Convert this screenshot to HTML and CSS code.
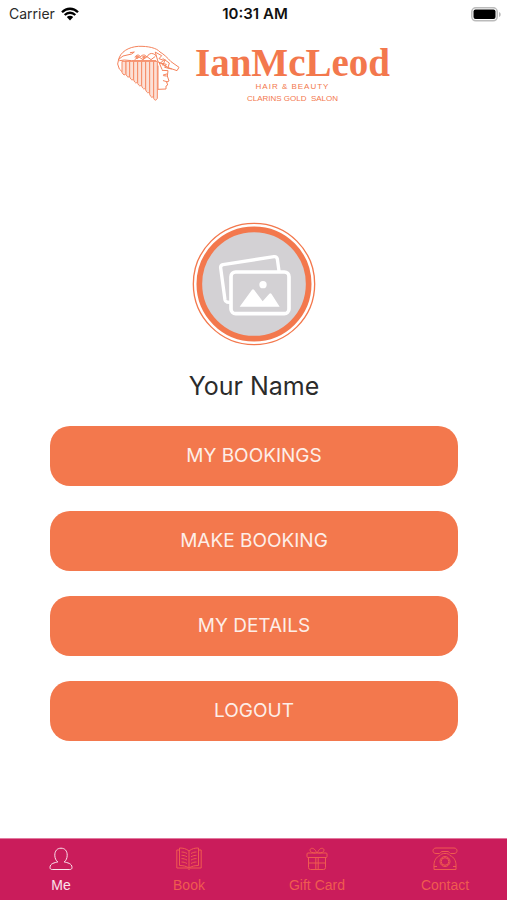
FILE: index.html
```html
<!DOCTYPE html>
<html lang="en">
<head>
<meta charset="utf-8">
<meta name="viewport" content="width=device-width, initial-scale=1">
<title>Ian McLeod Hair &amp; Beauty</title>
<link rel="stylesheet" href="styles.css">
</head>
<body>
<div class="status">
  <div class="carrier">
    <span>Carrier</span>
    <svg class="wifi" viewBox="0 0 18 14" aria-hidden="true">
      <path d="M1 5.2C5.6.6 12.4.6 17 5.2M3.7 8C6.8 5 11.2 5 14.3 8" fill="none" stroke="#000" stroke-width="2.3"/>
      <path d="M5.8 10.1a4.6 4.6 0 0 1 6.4 0L9 13.4z"/>
    </svg>
  </div>
  <time class="clock">10:31 AM</time>
  <svg class="battery" viewBox="0 0 30 15" aria-hidden="true">
    <rect x=".8" y=".8" width="25.400" height="13" rx="4" fill="#fff" stroke="#bbb" stroke-width="1.500"/>
    <rect x="2.500" y="2.500" width="22" height="9.600" rx="2"/>
    <path d="M28 5v5c2.300-.8 2.300-4.200 0-5z" fill="#bbb"/>
  </svg>
</div>

<header class="brand">
  <svg class="bust" viewBox="24 18 192 174" aria-hidden="true">
    <g fill="none" stroke="#f5835c" stroke-width="3" stroke-linejoin="round" stroke-linecap="round">
      <path d="M29 64C34 42 58 27 88 25c30-1 55 5 65 17 12 7 22 17 33 29l24 17-6 10-26-9-31-18-8-28"/>
      <path d="M29 64l-3 14 5 15 9 9M29 64l13-10 26-6 8-6-12 2M32 68l14-2 22 2h72"/>
      <path d="M78 57c4-8 14-8 16 0 5-8 16-8 19 0l8-9c8-4 16 0 20 5M78 64l12-7 12 8 12-9 12 9 12-9"/>
      <path d="M140 43l18 10-8 9 14 5-10 8 18 4-5 9 20 5M150 73l9 21M162 62l19 13-4 14M168 65l-6 17"/>
      <path d="M147 84v69M160 97l17 1-2 16 5 15-7 3 3 9-5 3v9l-24 1"/>
      <path d="M163 111l10-3M164 113l8 1M163 128l10 3"/>
    </g>
    <g fill="#fce0d6" stroke="#f68a64" stroke-width="3" stroke-linejoin="round">
      <path d="M39 70h12v37q-6 9-12-4z"/><path d="M51 70h11v44q-5 9-11-5z"/>
      <path d="M62 70h12v52q-5 10-12-5z"/><path d="M74 70h12v61q-6 10-12-5z"/>
      <path d="M86 70h12v70q-6 9-12-4z"/><path d="M98 70h12v79q-6 10-12-5z"/>
      <path d="M110 70h12v91q-6 9-12-5z"/><path d="M122 70h12v104q-6 10-12-5z"/>
      <path d="M134 70h11v111q-6 11-11 0z"/>
    </g>
    <path d="M78 56q9-8 14 2l-8 6zM99 56q9-7 13 2l-9 7z" fill="#f79470"/>
  </svg>
  <div class="brand-text">
    <h1 class="wordmark">IanMcLeod</h1>
    <p class="tagline wide">HAIR &amp; BEAUTY</p>
    <p class="tagline">CLARINS GOLD&nbsp; SALON</p>
  </div>
</header>

<main class="profile">
  <svg class="avatar" viewBox="22 22 372 372" role="img" aria-label="Profile photo">
    <circle cx="208" cy="208" r="182" fill="#fff" stroke="#f3784d" stroke-width="4"/>
    <circle cx="208" cy="208" r="164" fill="#d3d1d4" stroke="#f3784d" stroke-width="17"/>
    <path d="M134 263l-8-1q-4-1-5-6L108 160q-1-8 7-10l153-24q8-1 10 7l5 36" fill="none" stroke="#fff" stroke-width="10" stroke-linecap="round" stroke-linejoin="round"/>
    <rect x="139" y="172" width="174" height="125" rx="14" fill="#d3d1d4" stroke="#fff" stroke-width="11"/>
    <circle cx="235" cy="210" r="11" fill="#fff"/>
    <path d="M165 276l37-51q3-3 6 0l26 35 20-23q3-3 6 0l25 39z" fill="#fff"/>
  </svg>
  <h2 class="name">Your Name</h2>
  <div class="actions">
    <button class="action" type="button">MY BOOKINGS</button>
    <button class="action" type="button">MAKE BOOKING</button>
    <button class="action" type="button">MY DETAILS</button>
    <button class="action" type="button">LOGOUT</button>
  </div>
</main>

<nav class="tabs">
  <a class="tab active" href="#me" aria-current="page">
    <svg class="tab-icon" viewBox="0 0 26 24" aria-hidden="true">
      <path d="M13 1.200c4 0 6.200 2.800 6.200 7 0 3-1.200 5.400-3 6.800 3 .7 7.800 1.300 7.800 5.500 0 1.400-.8 2-2.200 2H4.200c-1.400 0-2.200-.6-2.200-2 0-4.200 4.800-4.800 7.800-5.500-1.800-1.400-3-3.800-3-6.800 0-4.200 2.200-7 6.200-7z"/>
    </svg>
    <span>Me</span>
  </a>
  <a class="tab" href="#book">
    <svg class="tab-icon" viewBox="0 0 26 24" aria-hidden="true">
      <path d="M13 4C10 1.500 7 1 3.500 1v17.500c3.500 0 6.500.5 9.500 2.500 3-2 6-2.500 9.500-2.500V1C19 1 16 1.500 13 4v17M3.500 3H.8v18h10.500l1.700 1.500 1.700-1.500h10.500V3h-2.700"/>
      <path d="M5.500 5c2 0 3.500.4 5.500 1.500M5.500 8.300c2 0 3.500.4 5.500 1.500M5.500 11.600c2 0 3.500.4 5.500 1.500M5.500 15c2 0 3.500.4 5.500 1.500M20.500 5c-2 0-3.500.4-5.500 1.500M20.500 8.300c-2 0-3.500.4-5.500 1.500M20.500 11.600c-2 0-3.500.4-5.500 1.500M20.500 15c-2 0-3.500.4-5.500 1.500"/>
    </svg>
    <span>Book</span>
  </a>
  <a class="tab" href="#gift">
    <svg class="tab-icon" viewBox="0 0 26 24" aria-hidden="true">
      <rect x="3" y="6" width="20" height="4.500" rx="1"/>
      <path d="M4.500 10.500v10q0 2 2 2h13q2 0 2-2v-10M4.500 16h17M11.800 10.500v12M14.200 10.500v12"/>
      <path d="M11.500 6C8.500 6 6 5.200 6 3.200 6 .7 10 .2 12 4.500L13 6l1-1.500C16 .2 20 .7 20 3.200c0 2-2.500 2.800-5.500 2.800"/>
    </svg>
    <span>Gift Card</span>
  </a>
  <a class="tab" href="#contact">
    <svg class="tab-icon" viewBox="0 0 26 24" aria-hidden="true">
      <path d="M4 1h18c4 0 4 5.500 0 5.500h-3.500c-1 0-1.200-2-2.500-2h-6c-1.300 0-1.500 2-2.500 2H4C0 6.500 0 1 4 1z"/>
      <path d="M8 8.500C4 10 2 14 2 18v4.500h22V18c0-4-2-8-6-9.500M8 8.500c1-2.700 9-2.700 10 0M2 19.500h3M21 19.500h3"/>
      <circle cx="13" cy="14.500" r="5"/>
      <circle cx="13" cy="14.500" r="3.800"/>
    </svg>
    <span>Contact</span>
  </a>
</nav>
</body>
</html>
```

FILE: styles.css
```css
* {
  box-sizing: border-box;
}

body {
  margin: 0;
  min-height: 100vh;
  display: flex;
  flex-direction: column;
  background: #fff;
  color: #2b2b2b;
  font-family: Inter, "Liberation Sans", sans-serif;
}

h1, h2, p {
  margin: 0;
  font-weight: 400;
}

.status {
  display: grid;
  grid-template-columns: 1fr auto 1fr;
  align-items: center;
  height: 28px;
  padding: 0 6px 0 9px;
  font-size: 14px;
  line-height: 20px;
}

.carrier {
  display: flex;
  align-items: center;
  gap: 6px;
}

.wifi {
  width: 18px;
  height: 14px;
}

.clock {
  color: #111;
  font-size: 15px;
  font-weight: 600;
}

.battery {
  width: 30px;
  height: 15px;
  justify-self: end;
}

.brand {
  display: flex;
  justify-content: center;
  gap: 14px;
  padding-top: 16px;
}

.bust {
  width: 64px;
  height: 58px;
}

.brand-text {
  height: 58px;
  color: #f3784d;
  text-align: center;
}

.wordmark {
  font: 700 39px/37px "Liberation Serif", serif;
}

.tagline {
  font: 400 8px/12px "Liberation Sans", sans-serif;
}

.wide {
  letter-spacing: 1px;
}

.profile {
  flex: 1;
  display: flex;
  flex-direction: column;
  align-items: center;
  padding: 120px 49px 24px 50px;
}

.avatar {
  width: 124px;
  height: 124px;
}

.name {
  margin: 24px 0;
  font-size: 25px;
  line-height: 32px;
}

.actions {
  width: 100%;
  display: grid;
  gap: 25px;
}

.action {
  height: 60px;
  border: 0;
  border-radius: 20px;
  background: #f3784d;
  color: #fdeee8;
  font: 400 19px/24px Inter, "Liberation Sans", sans-serif;
}

.tabs {
  display: grid;
  grid-template-columns: repeat(4, 1fr);
  gap: 6px;
  height: 62px;
  padding: 8px 1px 0 0;
  border-top: 1px solid #e2799f;
  background: #ca1c5b;
}

.tab {
  display: flex;
  flex-direction: column;
  align-items: center;
  gap: 6px;
  color: #ef5b50;
  font: 400 14px/16px "Liberation Sans", sans-serif;
  text-decoration: none;
}

.active {
  color: #fbe3ec;
}

.tab-icon {
  width: 26px;
  height: 24px;
  fill: none;
  stroke: currentColor;
  stroke-width: 1;
  stroke-linejoin: round;
}
```
